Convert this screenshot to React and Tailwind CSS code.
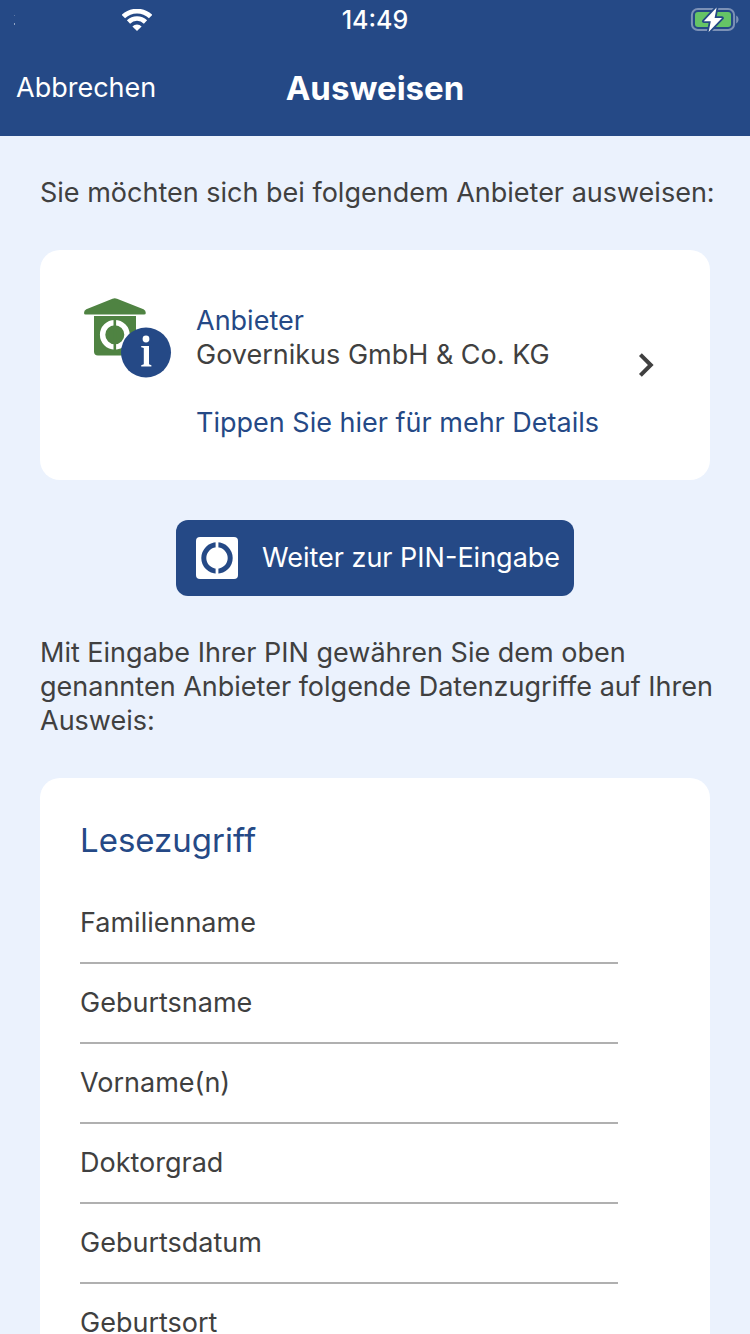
const accessRights = [
  "Familienname",
  "Geburtsname",
  "Vorname(n)",
  "Doktorgrad",
  "Geburtsdatum",
  "Geburtsort",
];

function SignalDots() {
  return (
    <svg width="2" height="12" viewBox="0 0 2 12" aria-hidden="true">
      <rect y="1" width="1" height="1" fill="#fff" fillOpacity="0.25" />
      <rect y="9" width="1" height="2" fill="#fff" fillOpacity="0.5" />
    </svg>
  );
}

function WifiIcon() {
  return (
    <svg width="30" height="22" viewBox="0 0 30 22" fill="none" aria-hidden="true">
      <path d="M1.4 7.6A19.6 19.6 0 0 1 28.6 7.6" stroke="#fff" strokeWidth="4.8" />
      <path d="M6.5 13A12.2 12.2 0 0 1 23.5 13" stroke="#fff" strokeWidth="4.6" />
      <path d="M15 22L10.4 17.4A6.6 6.6 0 0 1 19.6 17.4Z" fill="#fff" />
    </svg>
  );
}

function BatteryIcon() {
  return (
    <svg width="49" height="26" viewBox="0 0 49 26" fill="none" aria-hidden="true">
      <rect x="1.9" y="2" width="42.2" height="21" rx="6" stroke="#fff" strokeOpacity="0.4" strokeWidth="2" />
      <path d="M46.2 8.6C49.3 9.8 49.3 15.2 46.2 16.4Z" fill="#fff" fillOpacity="0.4" />
      <rect x="5" y="5" width="36" height="15" rx="3" fill="#65c466" />
      <path
        d="M26.6 .6L13.8 14.2H20.8L18.6 25L32 11H24.6Z"
        fill="#fff"
        stroke="#254986"
        strokeWidth="3.6"
        strokeLinejoin="round"
        paintOrder="stroke"
      />
    </svg>
  );
}

function ProviderIcon() {
  return (
    <svg width="88" height="80" viewBox="0 0 88 80" aria-hidden="true">
      <path d="M28.5 .8Q30.8-.2 33 .8L59.5 11.2Q61.8 12.4 61.8 15Q61.8 16.6 60 16.6H1.6Q0 16.6 0 15Q0 12.4 2.3 11.2Z" fill="#4f8342" />
      <path d="M10 18H52V57.4H14Q10 57.4 10 53.4Z" fill="#4f8342" />
      <circle cx="30.8" cy="36.8" r="12.2" fill="none" stroke="#fff" strokeWidth="5.4" />
      <path d="M30.8 20V54" stroke="#4f8342" strokeWidth="2.6" />
      <circle cx="62" cy="54.5" r="25" fill="#254986" />
      <circle cx="62" cy="41" r="3.4" fill="#fff" />
      <path d="M57.2 48H65V66.2L67.4 67.2V68.4H57.2V67.2L59.8 66.2V50L57.2 49.2Z" fill="#fff" />
    </svg>
  );
}

function IdIcon() {
  return (
    <svg width="42" height="42" viewBox="0 0 42 42" aria-hidden="true">
      <rect width="42" height="42" rx="4" fill="#fff" />
      <circle cx="21" cy="21" r="13.2" fill="none" stroke="#254986" strokeWidth="5" />
      <path d="M21 4V38" stroke="#fff" strokeWidth="2.8" />
    </svg>
  );
}

function ChevronIcon() {
  return (
    <svg width="16" height="24" viewBox="0 0 16 24" fill="none" aria-hidden="true">
      <path d="M2.4 1.6L12.8 12L2.4 22.4" stroke="#404040" strokeWidth="4" />
    </svg>
  );
}

export default function App() {
  return (
    <div className="flex h-screen flex-col bg-[#ebf2fd] font-['Inter',sans-serif] text-[27px] leading-[34px] text-[#404040]">
      <header className="shrink-0 bg-[#254986] text-white">
        <div className="grid h-10 grid-cols-3 items-center">
          <div className="flex items-center gap-[106px] pl-3.5">
            <SignalDots />
            <WifiIcon />
          </div>
          <time className="text-center text-[25px] font-medium">14:49</time>
          <div className="flex justify-end pr-[11px]">
            <BatteryIcon />
          </div>
        </div>
        <nav className="grid h-24 grid-cols-[1fr_auto_1fr] items-center px-4">
          <button type="button" className="justify-self-start">Abbrechen</button>
          <h1 className="text-[33px] font-bold">Ausweisen</h1>
        </nav>
      </header>

      <main className="min-h-0 flex-1 overflow-y-auto px-10 pt-10 [scrollbar-width:none]">
        <p className="-mr-2">Sie möchten sich bei folgendem Anbieter ausweisen:</p>

        <button
          type="button"
          className="mt-10 flex w-full items-center rounded-[20px] bg-white pr-14 pl-11 text-left"
        >
          <span className="shrink-0 self-start pt-12">
            <ProviderIcon />
          </span>
          <span className="flex-1 pt-[54px] pb-10 pl-6">
            <span className="block text-[#254986]">Anbieter</span>
            <span className="block">Governikus GmbH &amp; Co. KG</span>
            <span className="mt-[34px] block text-[#254986]">Tippen Sie hier für mehr Details</span>
          </span>
          <ChevronIcon />
        </button>

        <button
          type="button"
          className="mx-auto mt-10 flex h-[76px] items-center gap-6 rounded-xl bg-[#254986] pr-3.5 pl-5 text-white"
        >
          <IdIcon />
          Weiter zur PIN-Eingabe
        </button>

        <p className="-mr-2 mt-10">
          Mit Eingabe Ihrer PIN gewähren Sie dem oben genannten Anbieter folgende Datenzugriffe auf Ihren Ausweis:
        </p>

        <section className="mt-10 rounded-[20px] bg-white pt-10 pr-[92px] pb-10 pl-10">
          <h2 className="mb-[22px] text-[33px] leading-[44px] text-[#254986]">Lesezugriff</h2>
          <ul>
            {accessRights.map((right) => (
              <li key={right} className="flex h-20 items-center border-b-2 border-[#b0b0b0]">
                {right}
              </li>
            ))}
          </ul>
        </section>
      </main>
    </div>
  );
}
